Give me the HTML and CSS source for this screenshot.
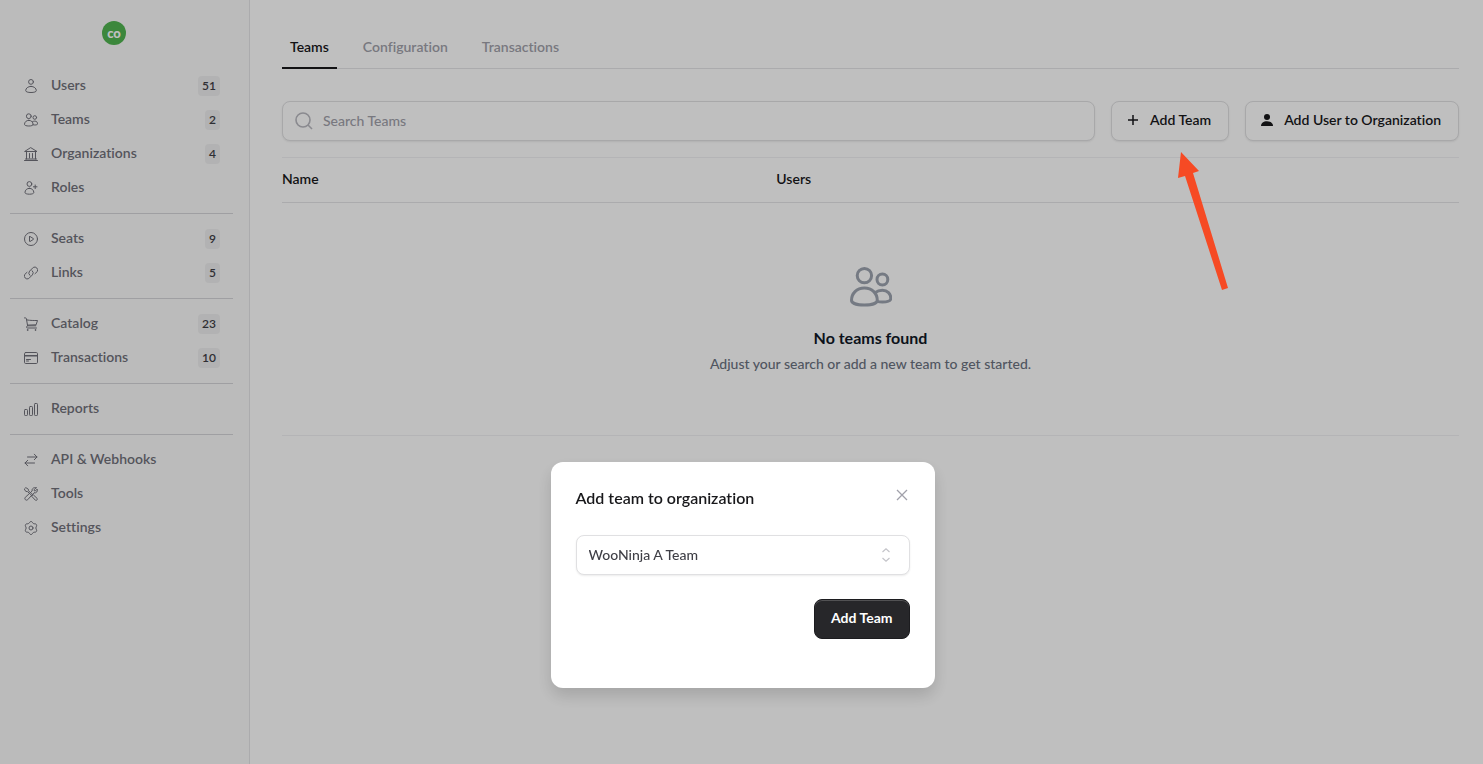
FILE: index.html
```
<!DOCTYPE html>
<html lang="en">
<head>
    <meta charset="utf-8">
    <title>Teams</title>
    <link rel="stylesheet" href="styles.css">
</head>
<body>
    <svg class="sprite" aria-hidden="true">
        <symbol id="user" viewBox="0 0 14 14">
            <circle cx="7" cy="2.9" r="2.4"/>
            <path d="M7 7.400c-3.100 0-5.300 1.900-5.300 4.200 0 1.300 2.300 1.900 5.300 1.900s5.300-.6 5.300-1.900c0-2.300-2.200-4.200-5.300-4.200z"/>
        </symbol>
        <symbol id="users" viewBox="0 0 14 14">
            <circle cx="4.800" cy="3.200" r="2.400"/>
            <circle cx="10.800" cy="4.500" r="1.800"/>
            <path d="M4.800 7.300C2.200 7.300.5 9.200.5 11.400c0 1 1.800 1.600 4.300 1.600s4.300-.6 4.300-1.600c0-2.200-1.700-4.100-4.300-4.100z"/>
            <path d="M8.300 8.900c.7-.5 1.500-.8 2.500-.8 1.700 0 2.800 1.200 2.800 2.700 0 .8-1.200 1.200-2.800 1.200-.7 0-1.400-.1-1.900-.2"/>
        </symbol>
    </svg>

    <div class="layout">
        <aside class="sidebar">
            <div class="brand"><span class="logo">co</span></div>
            <nav class="nav">
                <a class="nav-item" href="#"><svg class="icon"><use href="#user"/></svg><span class="label">Users</span><span class="badge">51</span></a>
                <a class="nav-item" href="#"><svg class="icon"><use href="#users"/></svg><span class="label">Teams</span><span class="badge">2</span></a>
                <a class="nav-item" href="#">
                    <svg class="icon" viewBox="0 0 14 14"><path d="M1 4.500h12L7 .8z M2.500 4.500v7.500 M5.500 6.500v4.500 M8.500 6.500v4.500 M11.500 4.500v7.500 M1.500 12h11 M.5 13.500h13"/></svg>
                    <span class="label">Organizations</span><span class="badge">4</span>
                </a>
                <a class="nav-item" href="#">
                    <svg class="icon" viewBox="0 0 14 14"><circle cx="5.400" cy="3" r="2.400"/><path d="M5.400 7.300c-2.600 0-4.400 1.900-4.400 4.200 0 1.100 1.900 1.700 4.400 1.700s4.400-.6 4.400-1.700c0-2.300-1.800-4.200-4.400-4.200z M11.200 4v3.600 M9.400 5.800h3.600"/></svg>
                    <span class="label">Roles</span>
                </a>
                <hr class="divider">
                <a class="nav-item" href="#">
                    <svg class="icon" viewBox="0 0 14 14"><circle cx="7" cy="7" r="6.500"/><path d="M5.500 4.800v4.400c0 .3.200.4.500.3l3.400-2.100c.3-.2.300-.6 0-.8L6 4.500c-.3-.1-.5 0-.5.300z"/></svg>
                    <span class="label">Seats</span><span class="badge">9</span>
                </a>
                <a class="nav-item" href="#">
                    <svg class="icon" viewBox="0 0 14 14"><path d="M5.800 9.300a3 3 0 0 1-.2-4.200l3.700-3.700a3 3 0 0 1 4 4.100l-2.300 2.200"/><path d="M8.200 4.700a3 3 0 0 1 .2 4.200l-3.700 3.700a3 3 0 0 1-4-4.100L3 6.300"/></svg>
                    <span class="label">Links</span><span class="badge">5</span>
                </a>
                <hr class="divider">
                <a class="nav-item" href="#">
                    <svg class="icon" viewBox="0 0 14 14"><path d="M.5.900h1c.5 0 .8.3.9.800l1.200 7.100h8.200 M2.700 2.900c4 .7 7.200.6 10.800.6l-1.400 4.300-8.700.3 M3.600 8.800c-1.300.2-1.600 1.900-.3 2.200h9.200"/><circle cx="3.500" cy="13" r=".4"/><circle cx="11.300" cy="13" r=".4"/></svg>
                    <span class="label">Catalog</span><span class="badge">23</span>
                </a>
                <a class="nav-item" href="#">
                    <svg class="icon" viewBox="0 0 14 14"><rect x=".5" y="1.500" width="13" height="11" rx="1.200"/><path d="M.5 4.500h13 M.5 5h13 M2.500 8.500h4 M2.500 10h2"/></svg>
                    <span class="label">Transactions</span><span class="badge">10</span>
                </a>
                <hr class="divider">
                <a class="nav-item" href="#">
                    <svg class="icon" viewBox="0 0 14 14"><rect x=".5" y="7.500" width="3" height="6" rx=".8"/><rect x="5.500" y="4.500" width="3" height="9" rx=".8"/><rect x="10.500" y="1.500" width="3" height="12" rx=".8"/></svg>
                    <span class="label">Reports</span>
                </a>
                <hr class="divider">
                <a class="nav-item" href="#">
                    <svg class="icon" viewBox="0 0 14 14"><path d="M3.500 4h9.500 M10.300 1.200L13 4l-2.700 2.700 M10.500 10H1 M3.700 7.300L1 10l2.700 2.800"/></svg>
                    <span class="label">API &amp; Webhooks</span>
                </a>
                <a class="nav-item" href="#">
                    <svg class="icon" viewBox="0 0 14 14"><path d="M.6 1.800L1.800.6l2.500 1.600.3 1.600 3 3-.9.900-3-3-1.600-.3z M8.300 8.300l1-.5 3.800 3.600c.9.900-.8 2.700-1.700 1.800L7.800 9.400z M12 .8l-1.900 2 .2 1 1 .2 1.900-1.900c.9 2-.9 4.400-3.200 3.700l-6.300 6.900c-1.500 1.500-3.900-.8-2.400-2.400l6.900-6.300C7.500 1.700 9.900-.1 12 .8z"/></svg>
                    <span class="label">Tools</span>
                </a>
                <a class="nav-item" href="#">
                    <svg class="icon" viewBox="0 0 14 14"><circle cx="7" cy="7" r="2"/><path d="M5.600 1.300c.6-1.100 2.200-1.100 2.800 0l.4.700c.3.500.8.800 1.400.8h.8c1.300 0 2.100 1.300 1.500 2.400l-.4.800c-.3.600-.3 1.400 0 2l.4.800c.6 1.100-.2 2.400-1.500 2.400h-.8c-.6 0-1.100.3-1.400.8l-.4.700c-.6 1.100-2.200 1.100-2.800 0l-.4-.7c-.3-.5-.8-.8-1.400-.8H3c-1.300 0-2.100-1.300-1.500-2.400l.4-.8c.3-.6.3-1.400 0-2l-.4-.8C.9 4.100 1.700 2.800 3 2.800h.8c.6 0 1.100-.3 1.400-.8z"/></svg>
                    <span class="label">Settings</span>
                </a>
            </nav>
        </aside>

        <main class="main">
            <nav class="tabs">
                <a class="tab active" href="#">Teams</a>
                <a class="tab" href="#">Configuration</a>
                <a class="tab" href="#">Transactions</a>
            </nav>
            <div class="toolbar">
                <label class="search">
                    <svg class="search-icon" viewBox="0 0 18 18"><circle cx="8" cy="8" r="7"/><path d="M13 13l4 4"/></svg>
                    <input class="search-input" type="text" placeholder="Search Teams" aria-label="Search Teams">
                </label>
                <button class="btn" type="button">
                    <svg class="btn-icon" viewBox="0 0 12 12"><path class="plus" d="M6 1v10 M1 6h10"/></svg>
                    Add Team
                </button>
                <button class="btn" type="button">
                    <svg class="btn-icon" viewBox="0 0 12 12"><circle cx="6" cy="3" r="3"/><path d="M0 12c0-3 2.500-4.800 6-4.800s6 1.800 6 4.800z"/></svg>
                    Add User to Organization
                </button>
            </div>
            <table class="teams">
                <thead>
                    <tr><th class="col-name">Name</th><th>Users</th></tr>
                </thead>
                <tbody>
                    <tr>
                        <td class="empty" colspan="2">
                            <svg class="empty-icon"><use href="#users"/></svg>
                            <h3 class="empty-title">No teams found</h3>
                            <p class="empty-text">Adjust your search or add a new team to get started.</p>
                        </td>
                    </tr>
                </tbody>
            </table>
        </main>
    </div>

    <div class="overlay">
        <div class="modal" role="dialog" aria-labelledby="modal-title">
            <div class="modal-head">
                <h2 class="modal-title" id="modal-title">Add team to organization</h2>
                <button class="close" type="button" aria-label="Close">
                    <svg class="close-icon" viewBox="0 0 12 12"><path d="M1 1l10 10 M11 1L1 11"/></svg>
                </button>
            </div>
            <div class="select-wrap">
                <select class="select" aria-label="Team">
                    <option>WooNinja A Team</option>
                </select>
                <svg class="chevrons" viewBox="0 0 10 14"><path d="M1.500 4L5 .8 8.500 4 M1.500 10L5 13.200 8.500 10"/></svg>
            </div>
            <div class="modal-actions">
                <button class="btn-dark" type="button">Add Team</button>
            </div>
        </div>
    </div>

    <svg class="arrow" viewBox="0 0 52 140" aria-hidden="true"><path d="M4 0l18 19-6 2 35 115-6 2L8 24l-7 2z"/></svg>
</body>
</html>
```
FILE: styles.css
```
* {
    box-sizing: border-box;
}

body {
    margin: 0;
    font-family: Lato, sans-serif;
    font-size: 14px;
    line-height: 20px;
    font-weight: 500;
    font-variant-ligatures: none;
    color: #18181b;
    background: #fff;
}

button, input, select {
    font: inherit;
    color: inherit;
}

a {
    text-decoration: none;
}

.sprite {
    position: absolute;
    width: 0;
    height: 0;
}

.layout {
    display: flex;
    min-height: 100vh;
}

/* sidebar */
.sidebar {
    flex: none;
    width: 250px;
    padding: 21px 16px 0 10px;
    background: #fafafa;
    border-right: 1px solid #e4e4e7;
}

.brand {
    display: flex;
    justify-content: center;
    padding: 0 15px 24px 0;
}

.logo {
    width: 24px;
    height: 24px;
    border-radius: 50%;
    background: #50b450;
    color: #fff;
    font-size: 13px;
    font-weight: 900;
    line-height: 24px;
    text-align: center;
}

.nav-item {
    display: flex;
    align-items: center;
    gap: 13px;
    height: 34px;
    padding: 0 13px 0 14px;
    color: #71717a;
    font-weight: 600;
}

.icon {
    flex: none;
    width: 14px;
    height: 14px;
    fill: none;
    stroke: currentColor;
    stroke-linecap: round;
    stroke-linejoin: round;
}

.label {
    flex: 1;
    padding-bottom: 2px;
}

.badge {
    padding: 0 4px;
    border-radius: 4px;
    background: #eeeeef;
    color: #3f3f46;
    font-size: 12px;
}

.divider {
    height: 1px;
    margin: 8px 0;
    border: 0;
    background: #d4d4d8;
}

/* main */
.main {
    flex: 1;
    padding: 32px 24px 32px 32px;
}

.tabs {
    display: flex;
    gap: 18px;
    border-bottom: 1px solid #e4e4e7;
}

.tab {
    margin-bottom: -1px;
    padding: 5px 8px 10px;
    border-bottom: 2px solid transparent;
    color: #a1a1aa;
    font-weight: 600;
}

.tab.active {
    color: #18181b;
    border-color: #18181b;
}

.toolbar {
    display: flex;
    gap: 16px;
    margin: 32px 0 16px;
}

.search, .btn, .select {
    height: 40px;
    border: 1px solid #e0e0e2;
    border-radius: 8px;
    background: #fff;
    box-shadow: 0 1px 2px rgba(0, 0, 0, .08);
}

.search {
    display: flex;
    flex: 1;
    align-items: center;
    gap: 10px;
    padding: 0 12px;
}

.search-icon {
    flex: none;
    width: 18px;
    height: 18px;
    fill: none;
    stroke: #b8b8bf;
    stroke-width: 1.6;
}

.search-input {
    flex: 1;
    border: 0;
    padding: 0;
    outline: 0;
    background: none;
}

.search-input::placeholder {
    color: #a1a1aa;
}

.btn {
    display: flex;
    align-items: center;
    gap: 11px;
    padding: 0 17px 2px 15px;
    font-weight: 600;
}

.btn-icon {
    width: 12px;
    height: 12px;
    fill: currentColor;
}

.plus {
    stroke: currentColor;
    stroke-width: 1.5;
}

.teams {
    width: 100%;
    border-collapse: collapse;
    border-top: 1px solid #f1f1f3;
    border-bottom: 1px solid #f1f1f3;
}

.teams th {
    padding: 11px 0 13px;
    border-bottom: 1px solid #e4e4e7;
    font-weight: 600;
    text-align: left;
}

.teams .col-name {
    width: 42%;
}

.empty {
    padding: 63px 0 61px;
    text-align: center;
}

.empty-icon {
    display: block;
    width: 42px;
    height: 42px;
    margin: 0 auto 18px;
    fill: none;
    stroke: #9ca3af;
}

.empty-title {
    margin: 0 0 4px;
    color: #111827;
    font-size: 16px;
    line-height: 24px;
    font-weight: 700;
}

.empty-text {
    margin: 0;
    color: #6b7280;
}

/* modal */
.overlay {
    position: fixed;
    inset: 0;
    display: flex;
    align-items: flex-end;
    justify-content: center;
    padding: 0 0 76px 2px;
    background: rgba(0, 0, 0, .25);
}

.modal {
    width: 384px;
    padding: 24px 25px 49px;
    border-radius: 12px;
    background: #fff;
    box-shadow: 0 8px 16px rgba(0, 0, 0, .14);
}

.modal-head {
    display: flex;
    align-items: flex-start;
    justify-content: space-between;
    margin-bottom: 25px;
}

.modal-title {
    margin: 0;
    font-size: 16px;
    line-height: 24px;
    font-weight: 600;
}

.close {
    display: flex;
    padding: 3px 2px;
    border: 0;
    background: none;
}

.close-icon {
    width: 12px;
    height: 12px;
    stroke: #a1a1aa;
    stroke-width: 1.3;
}

.select-wrap {
    display: grid;
    align-items: center;
}

.select, .chevrons {
    grid-area: 1 / 1;
}

.select {
    width: 100%;
    padding: 0 12px;
    appearance: none;
    color: #3f3f46;
}

.chevrons {
    justify-self: end;
    width: 10px;
    height: 14px;
    margin-right: 19px;
    fill: none;
    stroke: #c4c4c9;
    stroke-width: 1.2;
    pointer-events: none;
}

.modal-actions {
    display: flex;
    justify-content: flex-end;
    margin-top: 24px;
}

.btn-dark {
    height: 40px;
    padding: 0 16px 2px;
    border: 1px solid #1c1c1f;
    border-radius: 8px;
    background: #27272a;
    box-shadow: inset 0 1px 0 rgba(255, 255, 255, .2);
    color: #fff;
    font-weight: 700;
}

/* pointer over the Add Team button */
.arrow {
    position: absolute;
    top: 152px;
    right: 254px;
    width: 52px;
    height: 140px;
    fill: #f64a24;
}
```
